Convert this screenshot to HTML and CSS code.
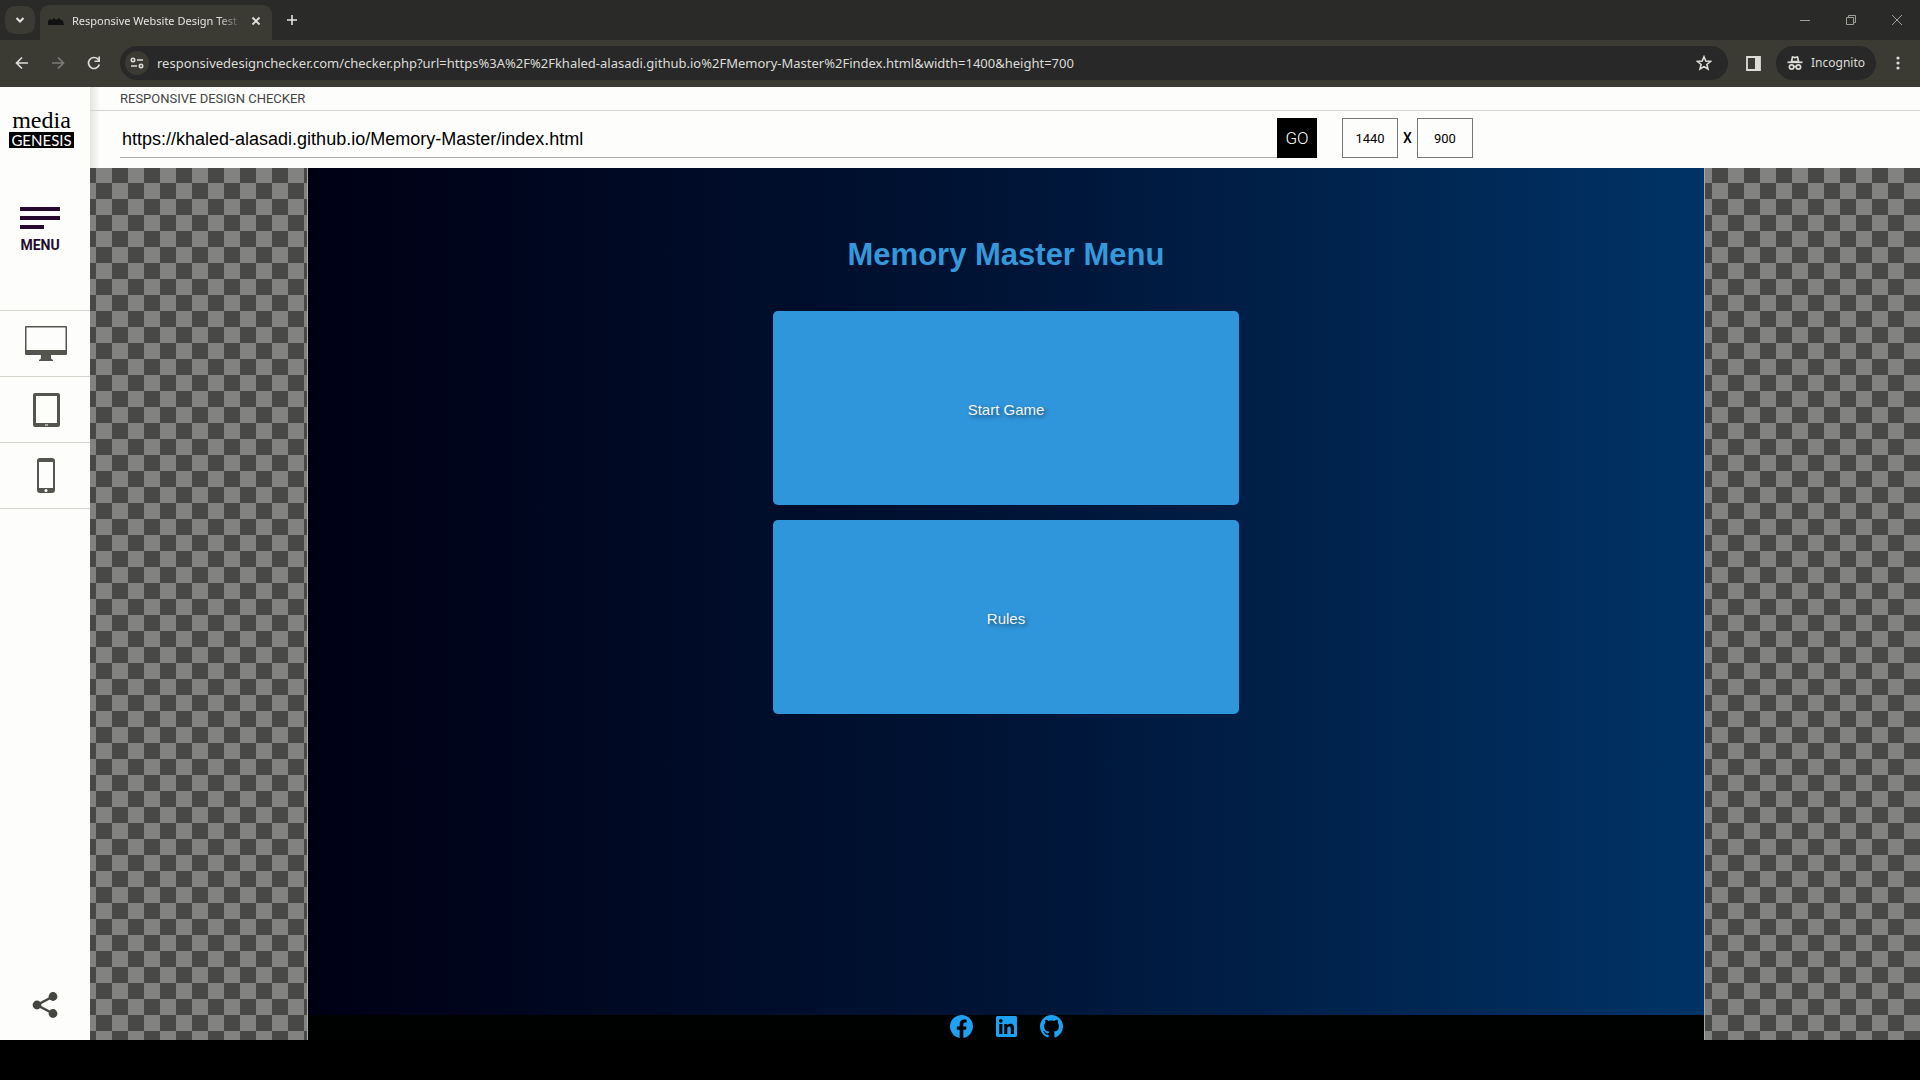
FILE: index.html
```
<!DOCTYPE html>
<html lang="en">
<head>
<meta charset="utf-8">
<title>Responsive Website Design Test</title>
<link rel="stylesheet" href="styles.css">
</head>
<body>
<div class="window">
  <div class="tabstrip">
    <button class="tab-search" aria-label="Search tabs"><svg width="10" height="8" viewBox="0 0 10 8"><path d="M1.500 2 5 5.500 8.500 2" fill="none" stroke="currentColor" stroke-width="2"/></svg></button>
    <div class="tab">
      <svg class="favicon" width="16" height="16" viewBox="0 0 16 16"><path d="M0 12V8l2-2 2 1 2-2 2 2 3-2 2 2 2 1 1 4z" fill="#111"/></svg>
      <span class="tab-title">Responsive Website Design Test</span>
      <button class="icon-button tab-close" aria-label="Close tab"><svg width="10" height="10" viewBox="0 0 10 10"><path d="M1.500 1.500l7 7m0-7l-7 7" stroke="currentColor" stroke-width="1.800"/></svg></button>
    </div>
    <button class="icon-button tab-new" aria-label="New tab"><svg width="12" height="12" viewBox="0 0 12 12"><path d="M6 1v10M1 6h10" stroke="currentColor" stroke-width="1.600"/></svg></button>
    <div class="window-controls">
      <button class="icon-button" aria-label="Minimize"><svg width="12" height="12" viewBox="0 0 12 12"><path d="M1 6.500h10" stroke="currentColor"/></svg></button>
      <button class="icon-button" aria-label="Restore"><svg width="12" height="12" viewBox="0 0 12 12"><path d="M1.500 3.500h7v7h-7zM3.500 3.500v-2h7v7h-2" fill="none" stroke="currentColor"/></svg></button>
      <button class="icon-button" aria-label="Close"><svg width="12" height="12" viewBox="0 0 12 12"><path d="M1 1l10 10M11 1L1 11" stroke="currentColor"/></svg></button>
    </div>
  </div>

  <div class="toolbar">
    <div class="nav-buttons">
      <button class="icon-button" aria-label="Back"><svg width="14" height="14" viewBox="0 0 14 14"><path d="M13 7H2M7 1.500L1.500 7 7 12.500" fill="none" stroke="currentColor" stroke-width="1.700"/></svg></button>
      <button class="icon-button nav-disabled" aria-label="Forward"><svg width="14" height="14" viewBox="0 0 14 14"><path d="M1 7h11M7 1.500L12.500 7 7 12.500" fill="none" stroke="currentColor" stroke-width="1.700"/></svg></button>
      <button class="icon-button" aria-label="Reload"><svg width="14" height="14" viewBox="0 0 14 14"><path d="M12.300 8.500A5.500 5.500 0 1 1 11 3.200L12.500 5" fill="none" stroke="currentColor" stroke-width="1.700"/><path d="M13 .5v5.500H7.500V4.400h3.800V.5z" fill="currentColor"/></svg></button>
    </div>
    <div class="omnibox">
      <button class="site-info" aria-label="Site information"><svg width="14" height="12" viewBox="0 0 14 12" fill="none" stroke="currentColor" stroke-width="1.600"><circle cx="3" cy="3" r="1.700"/><path d="M7 3h6M1 9h6"/><circle cx="11" cy="9" r="1.700"/></svg></button>
      <input class="omnibox-input" aria-label="Address" value="responsivedesignchecker.com/checker.php?url=https%3A%2F%2Fkhaled-alasadi.github.io%2FMemory-Master%2Findex.html&amp;width=1400&amp;height=700">
      <button class="icon-button" aria-label="Bookmark"><svg width="16" height="16" viewBox="0 0 16 16"><path d="M8 1.800l1.800 4.300 4.700.4-3.600 3 1.100 4.500L8 11.600 4 14l1.100-4.500-3.600-3 4.700-.4z" fill="none" stroke="currentColor" stroke-width="1.600"/></svg></button>
    </div>
    <button class="icon-button side-panel" aria-label="Side panel"><svg width="15" height="15" viewBox="0 0 15 15"><path d="M1 1h13v13H1z" fill="none" stroke="currentColor" stroke-width="1.800"/><path d="M9 1h5v13H9z" fill="currentColor"/></svg></button>
    <button class="incognito"><svg width="16" height="16" viewBox="0 0 16 16"><path d="M4.500 6.500L5.500 2l2.500.6 2.500-.6 1 4.500z" fill="none" stroke="currentColor" stroke-width="1.700"/><path d="M.5 7.300h15" stroke="currentColor" stroke-width="1.700"/><g fill="none" stroke="currentColor" stroke-width="1.700"><circle cx="4.600" cy="12" r="2.200"/><circle cx="11.400" cy="12" r="2.200"/><path d="M6.800 11.500h2.400"/></g></svg>Incognito</button>
    <button class="icon-button" aria-label="More"><svg width="4" height="14" viewBox="0 0 4 14" fill="currentColor"><circle cx="2" cy="2" r="1.600"/><circle cx="2" cy="7" r="1.600"/><circle cx="2" cy="12" r="1.600"/></svg></button>
  </div>

  <div class="page">
    <aside class="sidebar">
      <a class="logo" href="#"><span class="logo-top">media</span><span class="logo-bottom">GENESIS</span></a>
      <button class="menu"><span class="menu-bar"></span><span class="menu-bar"></span><span class="menu-bar menu-bar-short"></span><span class="menu-label">MENU</span></button>
      <nav class="devices">
        <a class="device" href="#" aria-label="Desktop"><svg width="44" height="36" viewBox="0 0 44 36"><path d="M2 0h40q1 0 1 1v27q0 1-1 1H27v3q0 1 2 2v1H15v-1q2-1 2-2v-3H2q-1 0-1-1V1q0-1 1-1zM2.500 1.500V24h39V1.500z" fill="#555550" fill-rule="evenodd"/></svg></a>
        <a class="device" href="#" aria-label="Tablet"><svg width="28" height="34" viewBox="0 0 28 34"><path d="M3 0h23q2 0 2 2v30q0 2-2 2H3q-2 0-2-2V2q0-2 2-2zM4 3v27h21V3z" fill="#555550" fill-rule="evenodd"/><path d="M13 32h3" stroke="#fff"/></svg></a>
        <a class="device" href="#" aria-label="Phone"><svg width="18" height="36" viewBox="0 0 18 36"><path d="M3 0h12q3 0 3 3v29q0 3-3 3H3q-3 0-3-3V3q0-3 3-3zM2 4v26h14V4z" fill="#555550" fill-rule="evenodd"/><circle cx="9" cy="32.500" r="1.500" fill="#fff"/></svg></a>
      </nav>
      <button class="icon-button share" aria-label="Share"><svg width="26" height="26" viewBox="0 0 26 26"><path d="M21 4.500L5 13l16 8.500" fill="none" stroke="#444440" stroke-width="2.500"/><g fill="#444440"><circle cx="21" cy="4.500" r="4.400"/><circle cx="5" cy="13" r="4.400"/><circle cx="21" cy="21.500" r="4.400"/></g></svg></button>
    </aside>

    <main class="checker">
      <header class="checker-header">
        <h1 class="checker-title">RESPONSIVE DESIGN CHECKER</h1>
        <form class="checker-form">
          <input class="url-input" aria-label="Website address" value="https://khaled-alasadi.github.io/Memory-Master/index.html">
          <button class="go" type="button">GO</button>
          <div class="size">
            <input class="size-input" aria-label="Width" value="1440"><span class="size-by">X</span><input class="size-input" aria-label="Height" value="900">
          </div>
        </form>
      </header>
      <div class="stage">
        <section class="preview">
          <div class="game">
            <h2 class="game-title">Memory Master Menu</h2>
            <button class="game-button">Start Game</button>
            <button class="game-button">Rules</button>
          </div>
          <footer class="game-footer">
            <a href="#" aria-label="Facebook"><svg width="23" height="23" viewBox="0 0 24 24"><path d="M24 12a12 12 0 1 0-13.900 11.900v-8.400H7.100V12h3V9.400c0-3 1.800-4.700 4.500-4.700 1.300 0 2.700.2 2.700.2v3h-1.500c-1.500 0-2 .9-2 1.900V12h3.400l-.5 3.500h-2.800v8.400A12 12 0 0 0 24 12z" fill="currentColor"/></svg></a>
            <a href="#" aria-label="LinkedIn"><svg width="21" height="21" viewBox="0 0 24 24"><path d="M22.300 0H1.700C.8 0 0 .8 0 1.700v20.600c0 .9.800 1.700 1.700 1.700h20.600c.9 0 1.700-.8 1.700-1.700V1.700c0-.9-.8-1.700-1.700-1.700zM7.300 20.500H3.700V9.100h3.600zM5.500 7.600a2.100 2.100 0 1 1 0-4.200 2.100 2.100 0 0 1 0 4.200zm15 12.900h-3.600v-5.600c0-1.300 0-3-1.800-3-1.900 0-2.200 1.400-2.200 2.900v5.700H9.400V9.100h3.400v1.500c.5-.9 1.700-1.800 3.400-1.800 3.600 0 4.300 2.400 4.300 5.500z" fill="currentColor"/></svg></a>
            <a href="#" aria-label="GitHub"><svg width="23" height="23" viewBox="0 0 16 16"><path d="M8 0C3.580 0 0 3.580 0 8c0 3.540 2.290 6.530 5.470 7.590.4.070.55-.17.55-.38 0-.19-.01-.82-.01-1.490-2.010.37-2.530-.49-2.690-.94-.09-.23-.48-.94-.82-1.130-.28-.15-.68-.52-.01-.53.63-.01 1.080.58 1.230.82.72 1.210 1.870.87 2.330.66.070-.52.28-.87.51-1.070-1.780-.2-3.640-.89-3.640-3.950 0-.87.31-1.590.82-2.150-.08-.2-.36-1.020.08-2.120 0 0 .67-.21 2.200.82.64-.18 1.320-.27 2-.27s1.360.09 2 .27c1.530-1.040 2.200-.82 2.200-.82.44 1.100.16 1.920.08 2.120.51.560.82 1.270.82 2.150 0 3.070-1.870 3.750-3.650 3.950.29.25.54.73.54 1.480 0 1.070-.01 1.930-.01 2.200 0 .21.150.46.55.38A8 8 0 0 0 16 8c0-4.420-3.580-8-8-8z" fill="currentColor"/></svg></a>
          </footer>
        </section>
      </div>
    </main>
  </div>
</div>
</body>
</html>
```
FILE: styles.css
```
* { box-sizing: border-box; }

body {
  margin: 0;
  background: #000;
  color: #000;
  font-family: "Liberation Sans", Arial, sans-serif;
}

button, input {
  margin: 0;
  padding: 0;
  border: 0;
  border-radius: 0;
  background: none;
  color: inherit;
  font: inherit;
}

svg { display: block; }

.window {
  display: flex;
  flex-direction: column;
  height: 100vh;
  padding-bottom: 40px;
}

.icon-button {
  display: flex;
  align-items: center;
  justify-content: center;
  flex: none;
}

/* Browser tab strip */
.tabstrip {
  display: flex;
  align-items: center;
  flex: none;
  height: 40px;
  padding: 0 17px 0 5px;
  background: #2a2a28;
  color: #e4e4e0;
  font: 11px/16px "Noto Sans", sans-serif;
}

.tab-search {
  display: flex;
  align-items: center;
  justify-content: center;
  width: 30px;
  height: 28px;
  border-radius: 10px;
  background: #3b3b34;
}

.tab {
  display: flex;
  align-items: center;
  align-self: flex-end;
  gap: 8px;
  width: 232px;
  height: 35px;
  margin-left: 5px;
  padding: 0 11px 4px 8px;
  border-radius: 9px 9px 0 0;
  background: #3b3b34;
}

.favicon { flex: none; }

.tab-title {
  flex: 1;
  overflow: hidden;
  white-space: nowrap;
  -webkit-mask-image: linear-gradient(to right, #000 85%, transparent);
  mask-image: linear-gradient(to right, #000 85%, transparent);
}

.tab-new { margin-left: 14px; }

.window-controls {
  display: flex;
  gap: 34px;
  margin-left: auto;
  color: #a0a09a;
}

/* Browser toolbar */
.toolbar {
  display: flex;
  align-items: center;
  flex: none;
  height: 47px;
  padding: 0 20px 1px 15px;
  background: #3b3b34;
  color: #dcdcd8;
  font: 13px/20px "Noto Sans", sans-serif;
}

.nav-buttons {
  display: flex;
  gap: 22px;
}

.nav-disabled { color: #7c7c76; }

.omnibox {
  display: flex;
  align-items: center;
  flex: 1;
  height: 34px;
  margin-left: 19px;
  padding: 0 16px 0 5px;
  border-radius: 17px;
  background: #282828;
}

.site-info {
  display: flex;
  align-items: center;
  justify-content: center;
  width: 24px;
  height: 24px;
  border-radius: 12px;
  background: #3b3b34;
}

.omnibox-input {
  flex: 1;
  min-width: 0;
  margin-left: 8px;
}

.side-panel { margin: 0 15px 0 18px; }

.incognito {
  display: flex;
  align-items: center;
  gap: 8px;
  height: 34px;
  margin-right: 20px;
  padding: 0 11px;
  border-radius: 17px;
  background: #282828;
  font-size: 12px;
}

/* Page */
.page {
  display: flex;
  flex: 1;
  min-height: 0;
}

.sidebar {
  display: flex;
  flex-direction: column;
  flex: none;
  width: 90px;
  background: #fdfdfb;
}

.logo {
  width: 65px;
  margin: 21px 0 0 9px;
  color: #000;
  text-align: center;
  text-decoration: none;
}

.logo-top {
  display: block;
  font: 24px/24px "Liberation Serif", serif;
}

.logo-bottom {
  display: block;
  background: #000;
  color: #fff;
  font: 15px/16px Lato, sans-serif;
}

.menu {
  display: flex;
  flex-direction: column;
  gap: 5px;
  width: 40px;
  margin: 59px 0 0 20px;
  color: #260a30;
}

.menu-bar {
  width: 40px;
  height: 4px;
  background: currentColor;
}

.menu-bar-short { width: 24px; }

.menu-label {
  margin-top: 3px;
  font: bold 14px/16px Roboto, sans-serif;
}

.devices {
  margin-top: 57px;
  border-top: 1px solid #d4d4cc;
}

.device {
  display: flex;
  align-items: center;
  justify-content: center;
  height: 66px;
  padding: 1px 0 0 1px;
  border-bottom: 1px solid #d4d4cc;
}

.share {
  width: 90px;
  margin: auto 0 22px;
}

.checker {
  display: flex;
  flex-direction: column;
  flex: 1;
  min-width: 0;
}

.checker-header {
  flex: none;
  height: 81px;
  background: linear-gradient(to right, #e4e4e0, #fdfdfb 10px);
}

.checker-title {
  margin: 0;
  height: 24px;
  padding-left: 30px;
  border-bottom: 1px solid #d4d4d0;
  color: #444;
  font: 13px/23px Roboto, sans-serif;
}

.checker-form {
  display: flex;
  height: 57px;
  padding: 7px 0 10px 30px;
}

.url-input {
  flex: 0 1 1157px;
  min-width: 0;
  border-bottom: 1px solid #aaa;
  padding: 3px 0 0 2px;
  font-size: 18px;
}

.go {
  width: 40px;
  background: #000;
  color: #fff;
  font: 300 17px/20px Roboto, sans-serif;
}

.size {
  display: flex;
  align-items: center;
  gap: 5px;
  margin-left: 25px;
  font: 13px/20px Roboto, sans-serif;
}

.size-by {
  font-size: 14px;
  font-weight: 500;
}

.size-input {
  width: 56px;
  height: 40px;
  border: 1px solid #77777a;
  text-align: center;
}

.stage {
  display: flex;
  justify-content: center;
  flex: 1;
  min-height: 0;
  padding-left: 2px;
  background: conic-gradient(#828280 25%, #484846 0 50%, #828280 0 75%, #484846 0) 6px 15px / 32px 32px;
}

.preview {
  display: flex;
  flex-direction: column;
  width: 1398px;
  max-width: 100%;
  border: solid #aaa;
  border-width: 0 1px;
  background: linear-gradient(to right, #000014, #001436 50%, #003366);
}

.game {
  display: flex;
  flex-direction: column;
  align-items: center;
  flex: 1;
  gap: 15px;
  padding-top: 63px;
}

.game-title {
  margin: 0 0 18px;
  color: #3498db;
  font-size: 31px;
  line-height: 47px;
}

.game-button {
  width: 466px;
  height: 194px;
  padding-top: 2px;
  border-radius: 5px;
  background: #3096db;
  color: #f2f6fa;
  font-size: 15px;
  text-shadow: 2px 2px 4px rgba(0, 0, 0, 0.5);
}

.game-footer {
  display: flex;
  align-items: center;
  justify-content: center;
  gap: 23px;
  height: 25px;
  padding-bottom: 2px;
  background: #000202;
  color: #1da1f2;
}

.game-footer a { color: inherit; }
```
